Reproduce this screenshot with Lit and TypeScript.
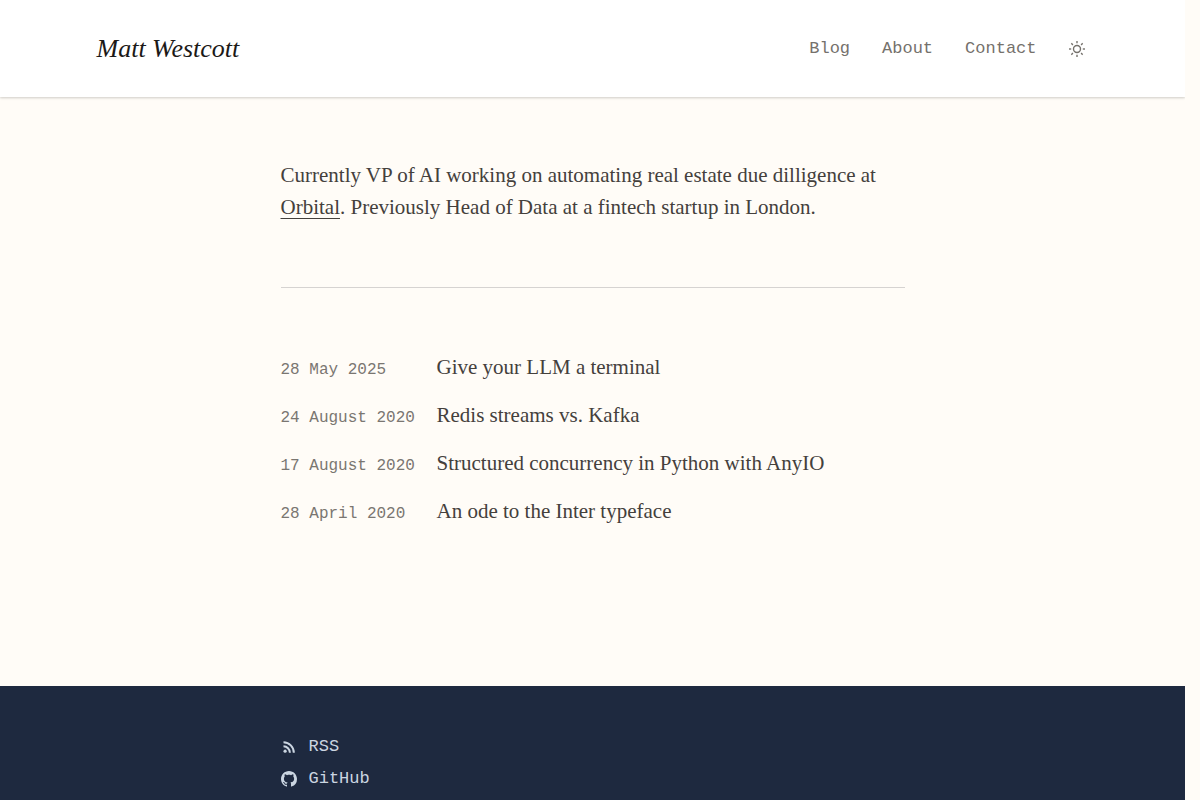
import { LitElement, html, css, svg } from "lit";
import { customElement, state } from "lit/decorators.js";

interface Post {
  date: string;
  iso: string;
  title: string;
}

const POSTS: Post[] = [
  { date: "28 May 2025", iso: "2025-05-28", title: "Give your LLM a terminal" },
  { date: "24 August 2020", iso: "2020-08-24", title: "Redis streams vs. Kafka" },
  { date: "17 August 2020", iso: "2020-08-17", title: "Structured concurrency in Python with AnyIO" },
  { date: "28 April 2020", iso: "2020-04-28", title: "An ode to the Inter typeface" },
];

const RAYS = [0, 45, 90, 135, 180, 225, 270, 315];

@customElement("app-root")
export class AppRoot extends LitElement {
  @state() private dark = false;

  static styles = css`
    :host {
      display: block;
      background: #fffcf7;
      color: #44403c;
      font-family: "Liberation Serif", serif;
      font-size: 21px;
      line-height: 32px;
    }
    .page {
      display: flex;
      flex-direction: column;
      min-height: 100vh;
      margin-right: 15px;
    }
    a {
      color: inherit;
      text-decoration: none;
    }
    .header {
      background: #fff;
      box-shadow: 0 1px 3px rgba(0, 0, 0, 0.1), 0 1px 2px rgba(0, 0, 0, 0.1);
      clip-path: inset(0 0 -8px 0);
    }
    .bar {
      display: flex;
      align-items: center;
      justify-content: space-between;
      box-sizing: border-box;
      max-width: 1024px;
      margin: 0 auto;
      padding: 32px 16px;
    }
    .brand {
      color: #1c1917;
      font-size: 26px;
      font-style: italic;
      line-height: 33px;
    }
    .nav {
      display: flex;
      align-items: center;
      gap: 32px;
      color: #75716c;
      font-family: "Liberation Mono", monospace;
      font-size: 17px;
      line-height: 24px;
    }
    .toggle {
      display: flex;
      padding: 0 4px 0 0;
      border: 0;
      background: none;
      color: inherit;
      cursor: pointer;
    }
    .icon {
      display: block;
      width: 16px;
      height: 16px;
    }
    .column {
      box-sizing: border-box;
      width: 100%;
      max-width: 656px;
      margin: 0 auto;
      padding: 0 16px;
    }
    .main {
      padding-top: 62px;
      padding-bottom: 159px;
    }
    .intro {
      margin: 0;
    }
    .inline-link {
      text-decoration: underline;
      text-decoration-thickness: 1px;
      text-underline-offset: 4px;
    }
    .rule {
      height: 1px;
      margin: 64px 0 63px;
      border: 0;
      background: #d6d3d1;
    }
    .posts,
    .links {
      display: flex;
      flex-direction: column;
      margin: 0;
      padding: 0;
      list-style: none;
    }
    .posts {
      gap: 16px;
    }
    .post {
      display: grid;
      grid-template-columns: 156px 1fr;
      align-items: baseline;
    }
    .date {
      color: #7a7671;
      font-family: "Liberation Mono", monospace;
      font-size: 16px;
      line-height: 24px;
    }
    .footer {
      flex: 1;
      background: #1e293f;
      color: #cbd5e1;
    }
    .links {
      gap: 8px;
      padding-top: 49px;
      font-family: "Liberation Mono", monospace;
      font-size: 17px;
      line-height: 24px;
    }
    .links li {
      display: flex;
    }
    .social {
      display: flex;
      align-items: center;
      gap: 12px;
    }
  `;

  render() {
    return html`
      <div class="page">
        <header class="header">
          <div class="bar">
            <a class="brand" href="#">Matt Westcott</a>
            <nav class="nav">
              <a href="#blog">Blog</a>
              <a href="#about">About</a>
              <a href="#contact">Contact</a>
              <button
                class="toggle"
                type="button"
                aria-label="Toggle theme"
                aria-pressed=${this.dark}
                @click=${() => (this.dark = !this.dark)}
              >
                <svg class="icon" viewBox="0 0 16 16" fill="none" stroke="currentColor" stroke-width="1.4">
                  <circle cx="8" cy="8" r="3.5"></circle>
                  ${RAYS.map((angle) => svg`<path d="M8 0v2.2" transform="rotate(${angle} 8 8)"></path>`)}
                </svg>
              </button>
            </nav>
          </div>
        </header>
        <main class="column main">
          <p class="intro">
            Currently VP of AI working on automating real estate due dilligence at
            <a class="inline-link" href="#orbital">Orbital</a>. Previously Head of Data at a fintech startup in London.
          </p>
          <hr class="rule" />
          <ul class="posts">
            ${POSTS.map(
              (post) => html`<li class="post">
                <time class="date" datetime=${post.iso}>${post.date}</time>
                <a href="#${post.iso}">${post.title}</a>
              </li>`
            )}
          </ul>
        </main>
        <footer class="footer">
          <div class="column">
            <ul class="links">
              <li>
                <a class="social" href="#rss">
                  <svg class="icon" viewBox="0 0 16 16" fill="none" stroke="currentColor" stroke-width="2">
                    <circle cx="4.1" cy="12.2" r="1.6" fill="currentColor" stroke="none"></circle>
                    <path d="M2.5 7.3a6.5 6.5 0 0 1 6.4 6.5M2.5 3.3a10.4 10.4 0 0 1 10.3 10.5"></path>
                  </svg>
                  RSS
                </a>
              </li>
              <li>
                <a class="social" href="#github">
                  <svg class="icon" viewBox="0 0 16 16" fill="currentColor">
                    <path
                      d="M8 0C3.58 0 0 3.58 0 8c0 3.54 2.29 6.53 5.47 7.59.4.07.55-.17.55-.38 0-.19-.01-.82-.01-1.49-2.01.37-2.53-.49-2.69-.94-.09-.23-.48-.94-.82-1.13-.28-.15-.68-.52-.01-.53.63-.01 1.08.58 1.23.82.72 1.21 1.87.87 2.33.66.07-.52.28-.87.51-1.07-1.78-.2-3.64-.89-3.64-3.95 0-.87.31-1.59.82-2.15-.08-.2-.36-1.02.08-2.12 0 0 .67-.21 2.2.82.64-.18 1.32-.27 2-.27s1.36.09 2 .27c1.53-1.04 2.2-.82 2.2-.82.44 1.1.16 1.92.08 2.12.51.56.82 1.27.82 2.15 0 3.07-1.87 3.75-3.65 3.95.29.25.54.73.54 1.48 0 1.07-.01 1.93-.01 2.2 0 .21.15.46.55.38A8.01 8.01 0 0 0 16 8c0-4.42-3.58-8-8-8z"
                    ></path>
                  </svg>
                  GitHub
                </a>
              </li>
            </ul>
          </div>
        </footer>
      </div>
    `;
  }
}
